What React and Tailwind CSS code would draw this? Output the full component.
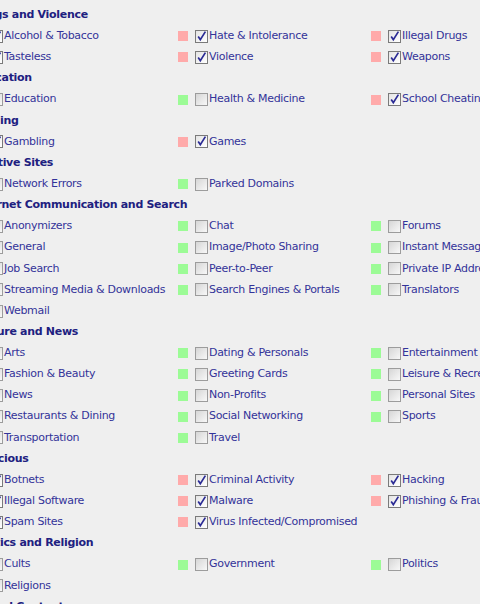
const sections = [
  {
    title: "Drugs and Violence",
    rows: [
      [
        { label: "Alcohol & Tobacco", risk: "high", checked: true },
        { label: "Hate & Intolerance", risk: "high", checked: true },
        { label: "Illegal Drugs", risk: "high", checked: true },
      ],
      [
        { label: "Tasteless", risk: "high", checked: true },
        { label: "Violence", risk: "high", checked: true },
        { label: "Weapons", risk: "high", checked: true },
      ],
    ],
  },
  {
    title: "Education",
    rows: [
      [
        { label: "Education", risk: "low" },
        { label: "Health & Medicine", risk: "low" },
        { label: "School Cheating", risk: "high", checked: true },
      ],
    ],
  },
  {
    title: "Gaming",
    rows: [
      [
        { label: "Gambling", risk: "high", checked: true },
        { label: "Games", risk: "high", checked: true },
      ],
    ],
  },
  {
    title: "Inactive Sites",
    rows: [
      [
        { label: "Network Errors", risk: "low" },
        { label: "Parked Domains", risk: "low" },
      ],
    ],
  },
  {
    title: "Internet Communication and Search",
    rows: [
      [
        { label: "Anonymizers", risk: "low" },
        { label: "Chat", risk: "low" },
        { label: "Forums", risk: "low" },
      ],
      [
        { label: "General", risk: "low" },
        { label: "Image/Photo Sharing", risk: "low" },
        { label: "Instant Messaging", risk: "low" },
      ],
      [
        { label: "Job Search", risk: "low" },
        { label: "Peer-to-Peer", risk: "low" },
        { label: "Private IP Addresses", risk: "low" },
      ],
      [
        { label: "Streaming Media & Downloads", risk: "low" },
        { label: "Search Engines & Portals", risk: "low" },
        { label: "Translators", risk: "low" },
      ],
      [{ label: "Webmail", risk: "low" }],
    ],
  },
  {
    title: "Culture and News",
    rows: [
      [
        { label: "Arts", risk: "low" },
        { label: "Dating & Personals", risk: "low" },
        { label: "Entertainment", risk: "low" },
      ],
      [
        { label: "Fashion & Beauty", risk: "low" },
        { label: "Greeting Cards", risk: "low" },
        { label: "Leisure & Recreation", risk: "low" },
      ],
      [
        { label: "News", risk: "low" },
        { label: "Non-Profits", risk: "low" },
        { label: "Personal Sites", risk: "low" },
      ],
      [
        { label: "Restaurants & Dining", risk: "low" },
        { label: "Social Networking", risk: "low" },
        { label: "Sports", risk: "low" },
      ],
      [
        { label: "Transportation", risk: "low" },
        { label: "Travel", risk: "low" },
      ],
    ],
  },
  {
    title: "Malicious",
    rows: [
      [
        { label: "Botnets", risk: "high", checked: true },
        { label: "Criminal Activity", risk: "high", checked: true },
        { label: "Hacking", risk: "high", checked: true },
      ],
      [
        { label: "Illegal Software", risk: "high", checked: true },
        { label: "Malware", risk: "high", checked: true },
        { label: "Phishing & Fraud", risk: "high", checked: true },
      ],
      [
        { label: "Spam Sites", risk: "high", checked: true },
        { label: "Virus Infected/Compromised", risk: "high", checked: true },
      ],
    ],
  },
  {
    title: "Politics and Religion",
    rows: [
      [
        { label: "Cults", risk: "low" },
        { label: "Government", risk: "low" },
        { label: "Politics", risk: "low" },
      ],
      [{ label: "Religions", risk: "low" }],
    ],
  },
  { title: "Sexual Content", rows: [] },
];

const Checkbox = ({ checked }) => (
  <span
    className={`flex h-[13px] w-[13px] shrink-0 items-start justify-end border ${
      checked
        ? "border-[#7a7a7a] bg-gradient-to-br from-[#e4e4e4] to-white"
        : "border-[#9c9c9c] bg-gradient-to-br from-[#d6d6d6] to-[#f8f8f8]"
    }`}
  >
    {checked && (
      <svg width="11" height="11" viewBox="0 0 11 11">
        <path
          d="M2.2 5.6 L4.3 8.6 L9.4 0.6"
          fill="none"
          stroke="#2b2b95"
          strokeWidth="1.7"
        />
      </svg>
    )}
  </span>
);

const Item = ({ item }) => (
  <div className="flex items-center">
    <span
      className={`h-[10px] w-[10px] shrink-0 ${
        item.risk === "high" ? "bg-[#ffaaaa]" : "bg-[#9cfb96]"
      }`}
    />
    <span className="ml-[7px]">
      <Checkbox checked={item.checked} />
    </span>
    <span className="ml-[1px] whitespace-nowrap text-[#333399]">{item.label}</span>
  </div>
);

export default function App() {
  return (
    <div
      className="h-[604px] w-[480px] overflow-hidden bg-[#efefef] text-[11px] tracking-[-0.3px]"
      style={{ fontFamily: '"DejaVu Sans", Verdana, sans-serif' }}
    >
      <div className="-ml-[27px] pt-[4.5px]">
        {sections.map((section) => (
          <div key={section.title}>
            <div className="flex h-[21.15px] items-center whitespace-nowrap font-bold text-[#202080]">
              {section.title}
            </div>
            {section.rows.map((row, i) => (
              <div
                key={i}
                className="grid h-[21.15px] grid-cols-[205px_193px_1fr] items-center"
              >
                {row.map((item) => (
                  <Item key={item.label} item={item} />
                ))}
              </div>
            ))}
          </div>
        ))}
      </div>
    </div>
  );
}
